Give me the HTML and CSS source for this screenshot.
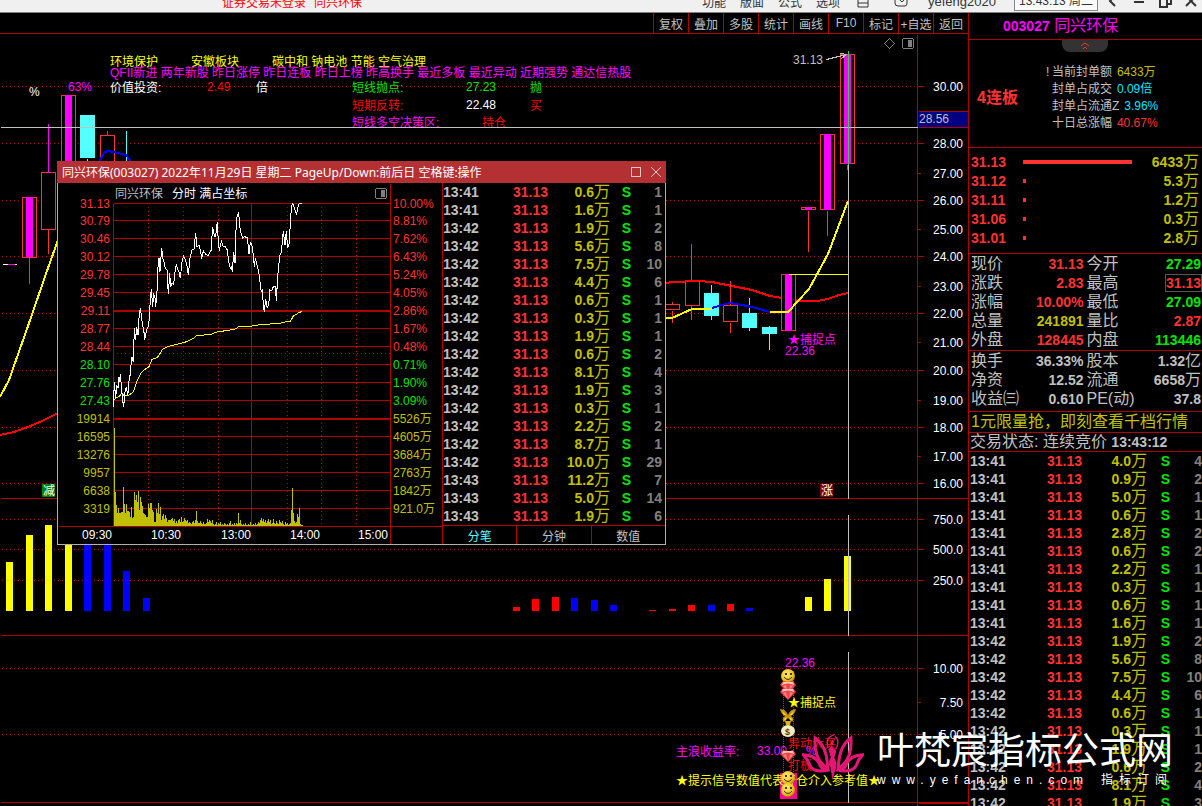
FILE: index.html
```html
<!DOCTYPE html>
<html lang="zh-CN">
<head>
    <meta charset="UTF-8">
    <meta name="viewport" content="width=device-width, initial-scale=1.0">
    <title>同兴环保 003027</title>
    <link rel="stylesheet" href="styles.css">
</head>
<body>
    <header class="titlebar">
        <div class="titlebar-row">
            <div class="login-state"><span>证券交易未登录</span><span>同兴环保</span></div>
            <nav class="menu">
                <a href="#">功能</a>
                <a href="#">版面</a>
                <a href="#">公式</a>
                <a href="#">选项</a>
            </nav>
            <svg class="bar-icon" viewBox="0 0 14 14"><path d="M2 0V13H12V0M2 5H12M2 9H12"/></svg>
            <svg class="bar-icon mail" viewBox="0 0 14 14"><path d="M1 4V9Q1 12 4 12H11Q13 12 13 9V4M4 4L8 8L12 4"/></svg>
            <span class="user">yefeng2020</span>
            <span class="clock">13:43:13 周二</span>
            <div class="window-buttons">
                <button aria-label="后退"><svg viewBox="0 0 14 14"><path d="M9 0L4 5L9 10"/></svg></button>
                <button aria-label="最小化"><svg viewBox="0 0 14 14"><path d="M2 6H12"/></svg></button>
                <button aria-label="还原"><svg viewBox="0 0 14 14"><path d="M2 3H9V11H2ZM5 0H13V8H10"/></svg></button>
                <button aria-label="关闭"><svg viewBox="0 0 14 14"><path d="M2 0L12 10M12 0L2 10"/></svg></button>
            </div>
        </div>
    </header>

    <main class="desk">
        <section class="workspace">
            <div class="toolbar">
                <button>复权</button>
                <button>叠加</button>
                <button>多股</button>
                <button>统计</button>
                <button>画线</button>
                <button>F10</button>
                <button>标记</button>
                <button>+自选</button>
                <button>返回</button>
            </div>

            <svg class="kline" viewBox="0 34 968 772">
                <g id="klineGrid"></g>

                <!-- 指标文字 -->
                <g class="t">
                    <g class="yellow">
                        <text x="110" y="66">环境保护</text>
                        <text x="191" y="66">安徽板块</text>
                        <text x="272" y="66">碳中和 钠电池 节能 空气治理</text>
                    </g>
                    <text class="magenta" x="110" y="77">QFII新进 两年新股 昨日涨停 昨日连板 昨日上榜 昨高换手 最近多板 最近异动 近期强势 通达信热股</text>
                    <text class="white" x="110" y="92">价值投资:</text>
                    <text class="pure-red" x="207" y="91">2.49</text>
                    <text class="white" x="256" y="92">倍</text>
                    <text class="green" x="352" y="92">短线抛点:</text>
                    <text class="green" x="466" y="91">27.23</text>
                    <text class="green" x="530" y="92">抛</text>
                    <text class="pure-red" x="352" y="110">短期反转:</text>
                    <text class="white" x="466" y="109">22.48</text>
                    <text class="pure-red" x="530" y="110">买</text>
                    <text class="magenta" x="352" y="127">短线多空决策区:</text>
                    <text class="pure-red" x="482" y="127">持仓</text>
                    <text class="white" x="29" y="96">%</text>
                    <text class="magenta" x="68" y="91">63%</text>
                    <text class="silver" x="793" y="64">31.13</text>
                </g>

                <!-- 左侧K线 -->
                <g class="candle">
                    <rect x="22" y="197" width="14" height="60"/><path d="M29 257V283"/>
                    <rect x="41" y="172" width="14" height="57"/><path d="M48 229V253"/>
                    <rect x="61" y="95" width="14" height="80"/>
                    <rect x="100" y="135" width="14" height="40"/><path d="M107 130V135"/>
                </g>
                <path class="line magenta-line" d="M48 123V172M7 264H14"/>
                <path class="line white-line" d="M2 264H7M14 264H16"/>
                <rect class="magenta" x="26" y="197" width="7" height="60"/>
                <rect class="magenta" x="65" y="95" width="7" height="70"/>
                <rect class="cyan" x="80" y="115" width="15" height="43"/>
                <path class="line cyan-line" d="M87 158V163M126 130V163"/>
                <path class="ma blue-line" d="M99 162L104 153L107 151L114 152L126 155L132 163"/>
                <path class="ma yellow-line" d="M0 397L9 380L28 326L48 268L58 240"/>
                <path class="ma red-line" d="M0 435L14 432L28 427L42 421L58 413"/>

                <!-- 右侧K线 -->
                <path class="ma red-line" d="M664 283L675 282L698 281L712 282L732 286L752 290L770 296L788 299L800 301L817 301L828 299L839 295L848 293"/>
                <g class="candle">
                    <rect x="664" y="304" width="15" height="5"/><path d="M672 301V304M672 310V322"/>
                    <rect x="685" y="281" width="14" height="24"/><path d="M691 243V281M691 305V319"/>
                    <rect x="723" y="305" width="14" height="16"/><path d="M730 280V305M730 322V332"/>
                    <rect x="781" y="274" width="14" height="56"/>
                    <rect x="801" y="207" width="14" height="2"/><path d="M808 210V251"/>
                    <rect x="820" y="134" width="14" height="75"/><path d="M827 210V235"/>
                    <rect x="840" y="54" width="14" height="109"/><path d="M847 164V169"/>
                </g>
                <g class="cyan">
                    <rect x="704" y="293" width="15" height="23"/>
                    <rect x="742" y="313" width="15" height="15"/>
                    <rect x="762" y="327" width="15" height="7"/>
                </g>
                <path class="line cyan-line" d="M711 284V319M749 297V330M769 325V349"/>
                <g class="magenta">
                    <rect x="785" y="274" width="7" height="57"/>
                    <rect x="805" y="207" width="7" height="3"/>
                    <rect x="824" y="134" width="7" height="76"/>
                    <rect x="844" y="54" width="7" height="110"/>
                </g>
                <path class="ma red-line" d="M685 281H699"/>
                <path class="ma yellow-line" d="M664 318H672L692 309H712"/>
                <path class="ma blue-line" d="M712 308L722 305L730 303L742 305L752 307L770 312"/>
                <path class="ma yellow-line" d="M770 312H788L809 289L828 254L848 201"/>
                <path class="line yellow-line" d="M788 274H847"/>
                <path class="line silver-line" d="M826 59L846 54M840 53L846 54L841 58"/>
                <g class="t magenta">
                    <text x="788" y="344">★捕捉点</text>
                    <text x="785" y="355">22.36</text>
                </g>

                <!-- 涨跌标记 -->
                <rect class="mark-down" x="42" y="484" width="13" height="13"/>
                <rect class="mark-up" x="820" y="484" width="13" height="13"/>
                <g class="t white">
                    <text x="43" y="495">减</text>
                    <text x="821" y="495">涨</text>
                </g>

                <g id="flowBars"></g>

                <!-- 十字光标 -->
                <path class="line silver-line" d="M0 127H917M848 164V498M848 514V635M848 651V802"/>
                <path class="line cursor-line" d="M848 50V164"/>
                <rect class="price-tag" x="918" y="111" width="50" height="17"/>
                <path class="line dark-line" d="M918 111H968M918 127H968"/>
                <text class="t silver" x="919" y="123">28.56</text>

                <path class="line gray-line" d="M889 38L894 43L889 48L884 43Z"/>
                <rect class="line gray-line" x="902" y="38" width="11" height="10" rx="2"/>
                <rect class="gray" x="908" y="40" width="4" height="7"/>

                <!-- 副图信号 -->
                <path class="dots pink-line" d="M783 670V776M793 670V776"/>
                <g class="t">
                    <text class="magenta" x="785" y="667">22.36</text>
                    <text class="yellow" x="788" y="707">★捕捉点</text>
                    <text class="pure-red" x="788" y="748">异动大买</text>
                    <text class="pure-red" x="788" y="770">打板</text>
                    <text class="magenta" x="676" y="756">主浪收益率:</text>
                    <text class="magenta" x="757" y="755">33.00</text>
                    <text class="magenta" x="806" y="755">%</text>
                </g>
                <rect class="pink" x="780" y="773" width="17" height="26"/>
                <text class="t yellow" x="676" y="785">★提示信号数值代表开仓介入参考值★</text>

                <defs>
                    <radialGradient id="gold" cx=".4" cy=".35" r=".7">
                        <stop offset="0" stop-color="#ffee70"/>
                        <stop offset=".7" stop-color="#e6bd1c"/>
                        <stop offset="1" stop-color="#a87400"/>
                    </radialGradient>
                    <symbol id="smile" viewBox="0 0 14 14">
                        <circle cx="7" cy="7" r="7" fill="url(#gold)"/>
                        <path d="M4 4H6V6H4ZM9 4H11V6H9Z" fill="#4a3200"/>
                        <path d="M3 8Q7 13 11 8" fill="none" stroke="#4a3200"/>
                    </symbol>
                    <symbol id="gem" viewBox="0 0 16 12">
                        <path d="M3 0Q8 2 13 0L16 4L8 12L0 4Z" fill="#f04048"/>
                        <path d="M3 1L13 1L14 4Q8 1 2 4Z" fill="#ffc4bc"/>
                        <path d="M3 5L8 11L6 4ZM10 4L9 10L13 5Z" fill="#ff807a"/>
                    </symbol>
                </defs>
                <use href="#smile" x="781" y="669" width="14" height="14"/>
                <use href="#gem" x="780" y="681" width="16" height="12"/>
                <use href="#gem" x="780" y="688" width="16" height="12"/>
                <path fill="#c8920c" d="M780 709Q786 709 788 715Q790 709 796 709Q795 714 791 716Q795 719 792 722L788 718L784 722Q781 719 785 716Q781 714 780 709Z"/>
                <path fill="#ffe03a" d="M782 711L786 715L784 715ZM794 711L790 715L792 715ZM784 719L787 717L785 721ZM792 719L789 717L791 721Z"/>
                <path fill="#e0b010" d="M785 721H791L790 725H786Z"/>
                <ellipse cx="788" cy="731" rx="7" ry="6" fill="#f6edbe"/>
                <text class="dollar" x="785" y="735">$</text>
                <use href="#gem" x="780" y="750" width="16" height="12"/>
                <use href="#smile" x="781" y="771" width="14" height="14"/>
                <use href="#smile" x="781" y="783" width="14" height="14"/>
            </svg>
        </section>

        <aside class="quote">
            <h1 class="stock"><b>003027</b> 同兴环保</h1>
            <section class="limit">
                <button class="fold" aria-label="收起">
                    <svg viewBox="0 0 10 8"><path d="M1 4L5 1L9 4M3 7L5 5L7 7"/></svg>
                </button>
                <div class="limit-row">
                    <strong>4连板</strong>
                    <dl class="limit-info">
                        <div><dt class="hint">当前封单额</dt><dd class="olive">6433万</dd></div>
                        <div><dt>封单占成交</dt><dd class="aqua">0.09倍</dd></div>
                        <div><dt>封单占流通Z</dt><dd class="aqua">3.96%</dd></div>
                        <div><dt>十日总涨幅</dt><dd class="red">40.67%</dd></div>
                    </dl>
                </div>
            </section>

            <table class="depth">
                <tr><td>31.13</td><td><i class="full"></i></td><td>6433<span>万</span></td></tr>
                <tr><td>31.12</td><td><i></i></td><td>5.3<span>万</span></td></tr>
                <tr><td>31.11</td><td><i></i></td><td>1.2<span>万</span></td></tr>
                <tr><td>31.06</td><td><i></i></td><td>0.3<span>万</span></td></tr>
                <tr><td>31.01</td><td><i></i></td><td>2.8<span>万</span></td></tr>
            </table>

            <table class="facts">
                <tr><th>现价</th><td class="red">31.13</td><th>今开</th><td class="green">27.29</td></tr>
                <tr><th>涨跌</th><td class="red">2.83</td><th>最高</th><td class="red"><span class="boxed">31.13</span></td></tr>
                <tr><th>涨幅</th><td class="red">10.00%</td><th>最低</th><td class="green">27.09</td></tr>
                <tr><th>总量</th><td class="olive">241891</td><th>量比</th><td class="red">2.87</td></tr>
                <tr><th>外盘</th><td class="red">128445</td><th>内盘</th><td class="green">113446</td></tr>
            </table>
            <table class="facts">
                <tr><th>换手</th><td>36.33%</td><th>股本</th><td>1.32<span>亿</span></td></tr>
                <tr><th>净资</th><td>12.52</td><th>流通</th><td>6658<span>万</span></td></tr>
                <tr><th>收益㈢</th><td>0.610</td><th>PE(动)</th><td>37.8</td></tr>
            </table>
            <a class="promo" href="#">1元限量抢，即刻查看千档行情</a>
            <p class="state">交易状态: 连续竞价 <b>13:43:12</b></p>
            <div class="tick-scroll">
                <table class="ticks" id="sideTicks"></table>
            </div>
        </aside>
    </main>

    <!-- 分时弹窗 -->
    <section class="popup">
        <header class="popup-title">
            <h2>同兴环保(003027) 2022年11月29日 星期二 PageUp/Down:前后日 空格键:操作</h2>
            <button aria-label="最大化"><svg viewBox="0 0 10 10"><rect x="0.5" y="0.5" width="9" height="9"/></svg></button>
            <button aria-label="关闭"><svg viewBox="0 0 10 10"><path d="M0 0L10 10M10 0L0 10"/></svg></button>
        </header>
        <div class="popup-body">
            <svg class="minute" viewBox="58 183 384 361">
                <g id="minuteGrid"></g>
                <text class="t silver" x="115" y="198">同兴环保</text>
                <text class="t white" x="172" y="198">分时 满占坐标</text>
                <rect class="line gray-line" x="375" y="188" width="11" height="10" rx="2"/>
                <rect class="gray" x="381" y="190" width="4" height="7"/>
                <g id="minuteVolume"></g>
                <svg x="50" y="155" width="400" height="395" viewBox="0 0 1200 1185">
                    <path class="trace yellow-line" d="M190 737L200 728L210 722L216 713L222 721L238 720L250 710L262 675L272 655L285 643L297 635L306 613L322 608L338 583L352 575L385 567L410 560L430 550L440 542L485 538L495 532L540 525L556 522L565 516L600 514L630 509L690 505L705 501L722 498L730 483L745 474L756 469"/>
                    <path class="trace white-line" d="M190 757L193 682L197 730L200 690L204 700L207 667L210 680L211 658L215 705L218 735L221 757L225 710L229 697L233 720L236 700L238 660L241 660L243 630L246 605L250 622L253 520L257 555L260 515L264 540L267 490L271 458L275 490L278 515L281 520L284 555L288 535L292 518L296 515L299 470L301 430L304 402L308 455L311 415L315 430L317 455L321 410L323 345L327 310L330 350L335 278L338 310L342 320L346 340L351 345L355 418L359 355L362 395L366 385L371 388L375 352L379 328L384 345L388 352L391 370L396 320L401 303L406 315L410 325L415 360L420 310L426 285L432 282L437 235L441 275L447 270L452 290L455 312L460 288L467 297L474 303L480 290L483 287L488 215L493 243L497 243L502 200L505 265L508 287L514 258L520 275L526 275L532 285L536 320L541 340L545 335L547 352L551 292L555 325L557 240L561 185L566 170L569 215L573 235L578 250L584 245L592 248L597 298L601 262L605 265L609 295L613 335L616 310L621 330L626 350L630 380L634 412L637 402L640 450L643 470L647 432L652 460L657 440L659 405L665 408L670 395L676 395L679 437L683 365L687 325L690 300L694 293L697 260L700 228L705 270L709 228L713 280L718 265L721 200L725 152L729 146L733 160L740 178L745 150L748 146L755 146"/>
                </svg>
            </svg>
            <div class="popup-side">
                <table class="ticks" id="popupTicks"></table>
                <div class="tabs">
                    <button class="active">分笔</button>
                    <button>分钟</button>
                    <button>数值</button>
                </div>
            </div>
        </div>
    </section>

    <div class="watermark">
        <svg viewBox="0 0 184 137">
            <path class="petal" d="M4 62Q42 62 54 94Q62 108 82 106Q36 118 22 92Q18 76 4 62ZM180 62Q142 62 130 94Q122 108 102 106Q148 118 162 92Q166 76 180 62Z"/>
            <path class="petal" d="M39 12Q76 38 76 102Q34 76 39 12ZM145 12Q108 38 108 102Q150 76 145 12Z"/>
            <path d="M92 16Q98 28 88 36L102 50L96 72Q108 88 98 110L91 137L84 98Q76 82 86 68L78 46L88 34Q82 22 92 16Z"/>
            <path class="vine" d="M78 40Q66 12 96 2M100 46Q114 20 98 6M82 62Q108 72 80 92"/>
        </svg>
        <div>
            <strong>叶梵宸指标公式网</strong>
            <p><span>www.yefanchen.com</span> <span>指标订阅</span></p>
        </div>
    </div>

    <script src="script.js"></script>
</body>
</html>
```
FILE: styles.css
```css
* {
    margin: 0;
    padding: 0;
    box-sizing: border-box;
}

body {
    height: 100vh;
    display: flex;
    flex-direction: column;
    overflow: hidden;
    background: #000;
    color: #c0c0c0;
    font-family: "Liberation Sans", "Noto Sans CJK SC", sans-serif;
    font-size: 12px;
}

button {
    background: none;
    border: none;
    color: inherit;
    font: inherit;
    cursor: pointer;
}

a {
    color: inherit;
    text-decoration: none;
}

/* 顶部标题栏 */
.titlebar {
    flex: none;
    height: 13px;
    overflow: hidden;
    background: #f0f0f0;
    border-bottom: 1px solid #808080;
    color: #333;
}

.titlebar-row {
    display: flex;
    align-items: center;
    height: 20px;
    margin-top: -9px;
}

.login-state {
    display: flex;
    gap: 8px;
    margin-left: 222px;
    color: #f00;
}

.menu {
    display: flex;
    gap: 14px;
    margin-left: auto;
    margin-right: 16px;
}

.bar-icon {
    width: 14px;
    height: 14px;
    margin-right: 24px;
}

.bar-icon path,
.window-buttons path {
    fill: none;
    stroke: #333;
    stroke-width: 2;
}

.bar-icon path {
    stroke-width: 1;
}

.mail {
    margin-right: 20px;
}

.user {
    font-size: 13px;
    margin-right: 18px;
}

.clock {
    padding: 0 4px;
    border: 1px solid #888;
    background: #fafafa;
    line-height: 18px;
}

.window-buttons {
    display: flex;
    gap: 12px;
    padding: 4px 4px 0 8px;
}

.window-buttons button {
    width: 14px;
    height: 14px;
}

.window-buttons svg {
    display: block;
    width: 14px;
}

.desk {
    flex: 1;
    min-height: 0;
    display: flex;
}

.workspace {
    flex: 1;
    min-width: 0;
}

.toolbar {
    display: flex;
    justify-content: flex-end;
    height: 21px;
    border-bottom: 1px solid #b00000;
}

.toolbar button {
    width: 35px;
    border-left: 1px solid #b00000;
    white-space: nowrap;
}

/* K线主图 */
.kline {
    display: block;
    width: 100%;
}

.t {
    font-size: 12px;
}

.white { fill: #fff; }
.silver { fill: #c0c0c0; }
.gray { fill: #808080; }
.yellow { fill: #ff0; }
.magenta { fill: #f0f; }
.cyan { fill: #54ffff; }
.pure-red { fill: #f00; }
.pink { fill: #ff0090; }
.green { fill: #00e600; color: #00e600; }
.red { fill: #ff3232; color: #ff3232; }
.olive { fill: #c0c000; color: #c0c000; }
.aqua { color: #00e6ff; }
.yellow-bar { fill: #ff0; }
.blue-bar { fill: #00f; }
.red-bar { fill: #f00; }
.mark-down { fill: #008000; }
.mark-up { fill: #800000; }
.price-tag { fill: #000080; }

.line,
.dots,
.ma,
.trace,
.candle {
    fill: none;
    shape-rendering: crispEdges;
}

.line,
.dots {
    transform: translate(0.5px, 0.5px);
}

.dots {
    stroke-dasharray: 1 3;
}

.candle rect,
.candle path {
    fill: #000;
    stroke: #ff3232;
    transform: translate(0.5px, 0.5px);
}

.ma {
    stroke-width: 2;
}

.trace {
    stroke-width: 3;
}

.thick {
    stroke-width: 2;
}

.dark-line { stroke: #b00000; }
.silver-line { stroke: #c0c0c0; }
.gray-line { stroke: #808080; }
.white-line { stroke: #fff; }
.yellow-line { stroke: #ff0; }
.magenta-line { stroke: #f0f; }
.cyan-line { stroke: #54ffff; }
.blue-line { stroke: #00f; }
.red-line { stroke: #f00; }
.pink-line { stroke: #ff0090; stroke-dasharray: 1 1; }
.cursor-line { stroke: #3ccd50; }

.end {
    text-anchor: end;
}

.dollar {
    fill: #5a4000;
    font-size: 9px;
    font-weight: bold;
}

/* 右侧报价栏 */
.quote {
    flex: none;
    width: 234px;
    display: flex;
    flex-direction: column;
    overflow: hidden;
    border-left: 1px solid #b00000;
    font-size: 16px;
}

.stock {
    height: 27px;
    padding-left: 34px;
    border-bottom: 1px solid #b00000;
    color: #f0f;
    font-size: 16px;
    font-weight: normal;
    line-height: 26px;
}

.stock b {
    font-size: 14px;
}

.limit {
    height: 108px;
    border-bottom: 1px solid #b00000;
}

.fold {
    display: block;
    width: 46px;
    height: 12px;
    margin-left: 93px;
    background: #333;
    border-radius: 0 0 8px 8px;
}

.fold svg {
    display: block;
    width: 10px;
    margin: 0 auto;
}

.fold path {
    fill: none;
    stroke: #ff3232;
}

.limit-row {
    display: flex;
    align-items: center;
    gap: 34px;
    padding: 12px 0 0 8px;
}

.limit-row strong {
    margin-top: -4px;
    color: #ff3232;
}

.limit-info {
    font-size: 12px;
    line-height: 17px;
}

.limit-info div {
    display: flex;
    gap: 5px;
}

.hint::before {
    content: "!";
    width: 6px;
    margin-left: -6px;
    float: left;
}

table {
    width: 100%;
    border-collapse: separate;
    border-spacing: 0;
    font-size: 14px;
    font-weight: bold;
}

td span,
.facts th {
    font-size: 16px;
    font-weight: normal;
}

td span {
    line-height: 16px;
}

.depth {
    padding: 4px 0 6px;
    border-bottom: 1px solid #b00000;
}

.depth tr,
.facts tr {
    height: 19px;
    line-height: 18px;
}

.depth td {
    padding-left: 2px;
    color: #ff3232;
}

.depth td:first-child {
    width: 52px;
}

.depth td:last-child {
    color: #c0c000;
    padding-right: 3px;
    text-align: right;
}

.depth i {
    display: block;
    width: 3px;
    height: 4px;
    background: #ff3232;
}

.depth i.full {
    width: 109px;
}

.facts {
    table-layout: fixed;
    padding-bottom: 1px;
    border-bottom: 1px solid #b00000;
}

.facts th {
    width: 56px;
    padding-left: 2px;
    text-align: left;
    white-space: nowrap;
}

.facts td {
    text-align: right;
}

.facts td:last-child {
    padding-right: 1px;
}

.facts th:nth-child(3) {
    width: 60px;
    padding-left: 3px;
}

.facts + .facts {
    padding-bottom: 3px;
}

.boxed {
    font-size: inherit;
    font-weight: inherit;
    outline: 1px solid #555;
}

.promo,
.state {
    flex: none;
    padding-left: 2px;
    border-bottom: 1px solid #b00000;
    line-height: 20px;
    white-space: nowrap;
}

.promo {
    height: 21px;
    color: #c0c000;
}

.state {
    height: 19px;
    padding-left: 1px;
    line-height: 18px;
}

.state b {
    font-size: 14px;
}

.tick-scroll {
    flex: 1;
    min-height: 0;
    overflow: hidden;
}

/* 分笔成交 */
.ticks {
    table-layout: fixed;
}

.ticks tr {
    height: 18px;
    line-height: 18px;
}

.ticks td {
    white-space: nowrap;
    text-align: right;
}

.ticks td:first-child {
    width: 38px;
    padding-left: 1px;
    color: #c0c0c0;
    text-align: left;
}

.ticks td:nth-child(2) { color: #ff3232; }
.ticks td:nth-child(3) { color: #c0c000; }
.ticks td:nth-child(4) { color: #00e600; }
.ticks td:nth-child(5) { color: #808080; }

#sideTicks td:nth-child(2) { width: 75px; }
#sideTicks td:nth-child(3) { width: 65px; }
#sideTicks td:nth-child(4) { width: 23px; }

#popupTicks td:first-child { padding-left: 0; }
#popupTicks td:nth-child(2) { width: 67px; }
#popupTicks td:nth-child(3) { width: 62px; }
#popupTicks td:nth-child(4) { width: 21px; }
#popupTicks td:nth-child(5) { padding-right: 3px; }

/* 分时弹窗 */
.popup {
    position: absolute;
    left: 57px;
    top: 161px;
    width: 609px;
    background: #000;
    border: 1px solid #b0b0b0;
    border-top: none;
}

.popup-title {
    display: flex;
    align-items: center;
    gap: 10px;
    height: 22px;
    margin: 0 -1px;
    padding: 0 5px;
    background: #b43033;
    color: #fff;
}

.popup-title h2 {
    flex: 1;
    font-family: "Noto Sans", "Noto Sans CJK SC", sans-serif;
    font-size: 12px;
    font-weight: normal;
    white-space: nowrap;
}

.popup-title button {
    width: 10px;
    height: 10px;
}

.popup-title svg {
    display: block;
    width: 10px;
    fill: none;
    stroke: #f0c8c8;
}

.popup-body {
    display: flex;
}

.minute {
    flex: none;
    width: 384px;
    height: 361px;
}

.popup-side {
    flex: 1;
    display: flex;
    flex-direction: column;
    border-left: 1px solid #b00000;
}

.tabs {
    flex: 1;
    display: flex;
    border-top: 1px solid #b00000;
}

.tabs button {
    flex: 1;
    border-right: 1px solid #b00000;
}

.tabs button:last-child {
    border-right: none;
}

.tabs .active {
    color: #54ffff;
}

/* 水印 */
.watermark {
    position: absolute;
    right: 29px;
    bottom: 18px;
    display: flex;
    align-items: flex-start;
    gap: 13px;
    color: #fff;
    white-space: nowrap;
}

.watermark svg {
    width: 62px;
    margin-top: 2px;
    fill: #e51673;
}

.watermark .petal,
.watermark .vine {
    fill: none;
    stroke: #e51673;
    stroke-width: 9;
}

.watermark .vine {
    stroke-width: 4;
}

.watermark strong {
    display: block;
    font-size: 37px;
    font-weight: normal;
    line-height: 40px;
}

.watermark p {
    display: flex;
    justify-content: space-between;
    font-size: 12px;
    line-height: 16px;
    letter-spacing: 6px;
}
```
FILE: script.js
```javascript
const RED = 'line dark-line';

function line(d, cls) {
    return `<path class="${cls}" d="${d}"/>`;
}

function label(x, y, text, cls) {
    return `<text class="t ${cls}" x="${x}" y="${y}">${text}</text>`;
}

// 主图坐标
const axis = [
    ['30.00', 86], ['28.00', 143], ['27.00', 173], ['26.00', 200], ['25.00', 229],
    ['24.00', 256], ['23.00', 286], ['22.00', 313], ['21.00', 342], ['20.00', 370],
    ['19.00', 400], ['18.00', 427], ['17.00', 456], ['16.00', 483],
    ['750.0', 519], ['500.0', 549], ['250.0', 580],
    ['10.00', 668], ['7.50', 702], ['5.00', 734]
];
const shortTicks = ['27.00', '25.00', '23.00', '21.00', '19.00', '17.00', '7.50'];
let grid = '';
axis.forEach(([text, y]) => {
    const short = shortTicks.includes(text);
    if (!short) {
        grid += line(`M1 ${y}H917`, 'dots dark-line');
    }
    grid += line(`M917 ${y}h${short ? 3 : 6}`, RED);
    grid += label(963, y + 5, text, 'white end');
});
grid += line('M917 34V806M0 498H968M0 635H968M0 802H968M918 803H968V806', RED);
document.getElementById('klineGrid').innerHTML = grid;

// 资金柱
const bars = [
    [6, 562, 'yellow'], [26, 535, 'yellow'], [45, 525, 'yellow'], [65, 515, 'yellow'],
    [84, 520, 'blue'], [104, 530, 'blue'], [123, 571, 'blue'], [143, 598, 'blue'],
    [513, 607, 'red'], [532, 599, 'red'], [552, 597, 'red'], [571, 598, 'blue'],
    [591, 600, 'blue'], [610, 605, 'blue'], [649, 610, 'red'], [669, 609, 'red'],
    [688, 605, 'red'], [708, 605, 'blue'], [727, 604, 'red'], [746, 608, 'blue'],
    [805, 597, 'yellow'], [824, 579, 'yellow'], [844, 556, 'yellow']
];
document.getElementById('flowBars').innerHTML = bars.map(([x, y, color]) =>
    `<rect class="${color}-bar" x="${x}" y="${y}" width="7" height="${611 - y}"/>`
).join('');

// 分时坐标
const rows = [
    ['31.13', '10.00%', 203], ['30.79', '8.81%', 220], ['30.46', '7.62%', 238],
    ['30.12', '6.43%', 256], ['29.78', '5.24%', 274], ['29.45', '4.05%', 292],
    ['29.11', '2.86%', 310], ['28.77', '1.67%', 328], ['28.44', '0.48%', 346],
    ['28.10', '0.71%', 364], ['27.76', '1.90%', 382], ['27.43', '3.09%', 400],
    ['19914', '5526万', 418], ['16595', '4605万', 436], ['13276', '3684万', 454],
    ['9957', '2763万', 472], ['6638', '1842万', 490], ['3319', '921.0万', 508]
];
let minute = '';
rows.forEach(([left, right, y], i) => {
    const color = i < 9 ? 'red' : i < 12 ? 'green' : 'olive';
    minute += line(`M113 ${y}H390`, i === 6 || i === 12 ? RED + ' thick' : RED);
    minute += label(110, y + 5, left, color + ' end');
    minute += label(393, y + 5, right, color);
});
[148, 183, 218, 287, 321, 356].forEach(x => {
    minute += line(`M${x} 206V526`, 'dots dark-line');
});
minute += line('M116 353H390', 'dots dark-line');
minute += line('M113 203V526M251 203V526M390 183V544M58 526H442', RED);
[['09:30', 82], ['10:30', 151], ['13:00', 221], ['14:00', 290], ['15:00', 358]].forEach(([text, x]) => {
    minute += label(x, 539, text, 'white');
});
document.getElementById('minuteGrid').innerHTML = minute;

const volume = [
    98, 34, 21, 13, 18, 13, 13, 14, 14, 39, 22, 13, 22, 15, 15, 14, 9, 19, 8, 9, 34, 26, 31, 24, 35, 16, 29, 24, 20, 13,
    12, 11, 9, 9, 22, 18, 23, 23, 16, 14, 4, 4, 17, 13, 23, 12, 19, 6, 10, 12, 7, 11, 8, 4, 6, 6, 6, 7, 8, 5,
    7, 3, 5, 3, 6, 7, 4, 9, 4, 5, 8, 6, 5, 6, 3, 4, 3, 2, 4, 5, 3, 6, 15, 5, 3, 3, 5, 3, 2, 4,
    2, 2, 3, 7, 4, 6, 5, 3, 6, 2, 1, 2, 4, 1, 3, 2, 4, 1, 2, 1, 3, 2, 1, 2, 1, 3, 5, 1, 2, 1,
    3, 1, 3, 2, 13, 3, 6, 2, 1, 2, 1, 3, 1, 1, 2, 1, 4, 1, 1, 2, 1, 3, 1, 2, 4, 3, 6, 8, 5, 7,
    4, 6, 3, 5, 7, 4, 6, 2, 3, 7, 3, 2, 5, 3, 2, 6, 4, 3, 5, 2, 1, 4, 2, 3, 1, 2, 3, 16, 38, 13,
    5, 3, 4, 12, 9, 18, 2, 1, 1
];
document.getElementById('minuteVolume').innerHTML = volume.map((v, i) =>
    `<rect class="olive" x="${114 + i}" y="${526 - v}" width="1" height="${v}"/>`
).join('');

// 分笔明细
function fillTicks(id, ticks) {
    document.getElementById(id).innerHTML = ticks.map(([time, amount, count]) =>
        `<tr><td>${time}</td><td>31.13</td><td>${amount}<span>万</span></td><td>S</td><td>${count}</td></tr>`
    ).join('');
}

fillTicks('popupTicks', [
    ['13:41', '0.6', 1], ['13:41', '1.6', 1], ['13:42', '1.9', 2], ['13:42', '5.6', 8],
    ['13:42', '7.5', 10], ['13:42', '4.4', 6], ['13:42', '0.6', 1], ['13:42', '0.3', 1],
    ['13:42', '1.9', 1], ['13:42', '0.6', 2], ['13:42', '8.1', 4], ['13:42', '1.9', 3],
    ['13:42', '0.3', 1], ['13:42', '2.2', 2], ['13:42', '8.7', 1], ['13:42', '10.0', 29],
    ['13:43', '11.2', 7], ['13:43', '5.0', 14], ['13:43', '1.9', 6]
]);

fillTicks('sideTicks', [
    ['13:41', '4.0', 4], ['13:41', '0.9', 2], ['13:41', '5.0', 1], ['13:41', '0.6', 1],
    ['13:41', '2.8', 2], ['13:41', '0.6', 2], ['13:41', '2.2', 1], ['13:41', '0.3', 1],
    ['13:41', '0.6', 1], ['13:41', '1.6', 1], ['13:42', '1.9', 2], ['13:42', '5.6', 8],
    ['13:42', '7.5', 10], ['13:42', '4.4', 6], ['13:42', '0.6', 1], ['13:42', '0.3', 1],
    ['13:42', '1.9', 1], ['13:42', '0.6', 2], ['13:42', '8.1', 4], ['13:42', '1.9', 3]
]);
```
